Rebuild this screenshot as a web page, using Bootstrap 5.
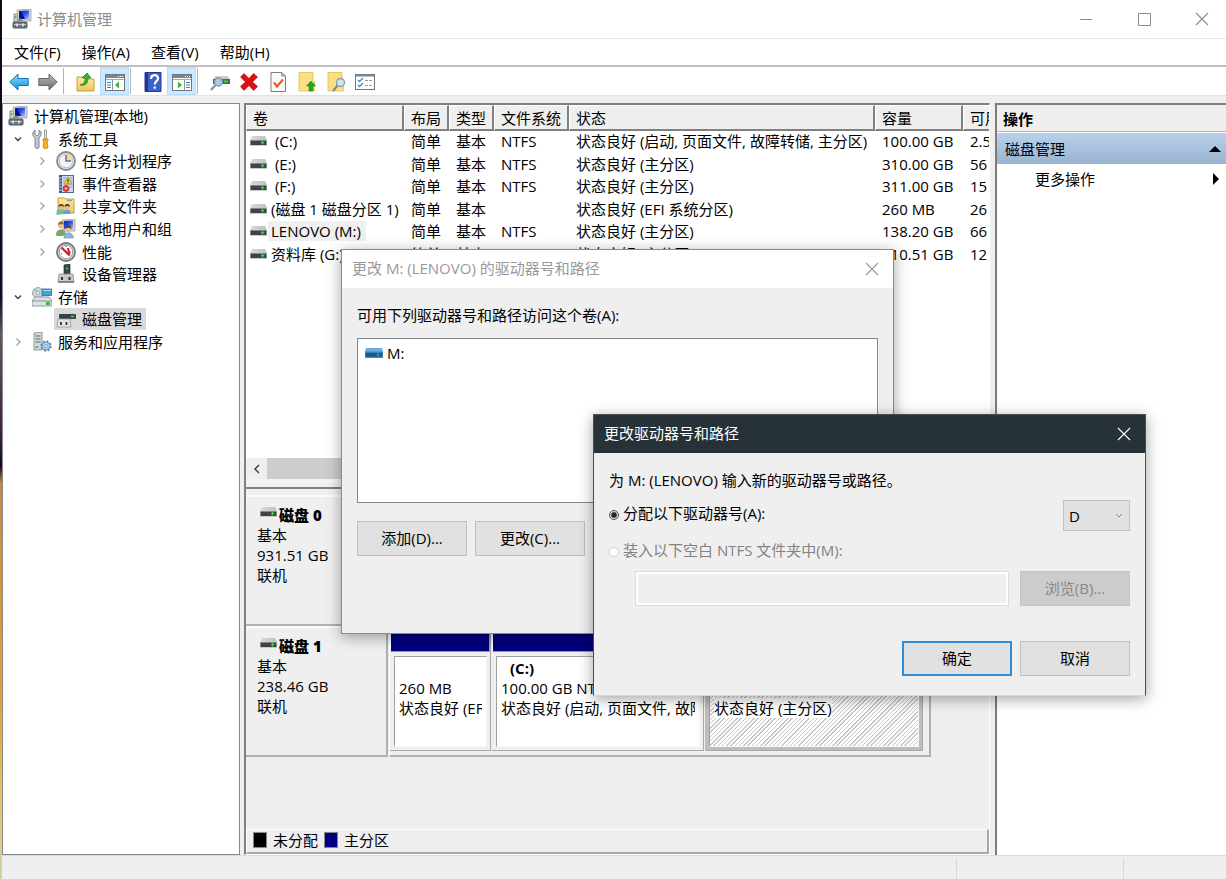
<!DOCTYPE html>
<html lang="zh-CN">
<head>
<meta charset="utf-8">
<meta name="viewport" content="width=device-width, initial-scale=1">
<title>计算机管理</title>
<link href="https://cdn.jsdelivr.net/npm/bootstrap@5.3.0/dist/css/bootstrap.min.css" rel="stylesheet">
<style>
  :root { --face: #efefef; --edge: #828790; --navy: #000080; }
  body, button, input, select { font-family: "Open Sans", "Noto Sans CJK SC", sans-serif; font-size: 15px; line-height: 20px; color: #000; }
  body { background: var(--face); overflow: hidden; }
  svg { display: block; flex: none; }
  a, a:hover { color: inherit; text-decoration: none; }
  .plain { border: 0; background: none; padding: 0; color: inherit; }
  .i20 { width: 20px; height: 20px; }
  .shell { min-width: 0; }

  .wallpaper { width: 2px; flex: none; background: linear-gradient(#120619 0%, #1a0b22 34%, #6b5560 38%, #3a1f33 50%, #120619 53%, #c98a3a 55%, #e0a23c 80%, #e6c66a 92%, #cfd2a8 100%); }
  .caption { height: 39px; background: #fff; border-bottom: 1px solid #e8e8e8; color: #8c8c8c; padding-left: 10px; gap: 5px; }
  .win-btns { margin-right: -5px; }
  .win-btns button { width: 58px; height: 38px; display: flex; align-items: center; justify-content: center; }
  .menubar { height: 28px; background: #fff; border-bottom: 2px solid #c0c0c4; padding: 0 0 1px 12px; gap: 21px; }
  .toolbar { height: 29px; background: #fff; border-bottom: 1px solid #e2e2e2; padding-left: 2px; }
  .toolbar button { width: 29px; height: 28px; padding-top: 2px; display: flex; align-items: center; justify-content: center; }
  .toolbar button.on { background: #cce8ff; border: 1px solid #b5dcfb; }
  .toolbar .rule { width: 1px; height: 26px; background: #b4b4b4; margin: 0 7px 0 1px; }

  .panes { padding-top: 7px; min-height: 0; }
  .tree { width: 238px; background: #fff; border: 1px solid var(--edge); flex: none; }
  .tree ul { display: grid; grid-auto-rows: 1fr; height: 248px; margin: 1px 0 0; padding: 0; list-style: none; }
  .tree li { display: flex; align-items: center; }
  .tree .lv0 { padding-left: 3px; }
  .tree .lv1 { padding-left: 7px; }
  .tree .lv2 { padding-left: 31px; }
  .tree .twist { width: 16px; height: 16px; margin-right: 4px; flex: none; }
  .tree a { display: flex; align-items: center; gap: 6px; padding: 0 4px 0 2px; height: 100%; }
  .tree a.picked { background: #d9d9d9; }

  .center { margin-left: 4px; min-width: 0; border: 2px solid #808080; border-right: 1px solid #fff; border-bottom: 1px solid #fff; }
  .volumes { height: 374px; background: #fff; overflow: hidden; flex: none; }
  .vol-table { table-layout: fixed; width: 817px; height: 161px; border-collapse: separate; border-spacing: 0; }
  .vol-table th { height: 26px; padding: 0 0 0 6px; font-weight: 400; background: var(--face); border: 1px solid #fff; border-right: 2px solid #808080; border-bottom: 2px solid #808080; overflow: hidden; white-space: nowrap; }
  .vol-table td { padding: 0 0 2px 7px; white-space: nowrap; line-height: 20px; overflow: hidden; }
  .vol-table td:first-child { padding-left: 4px; }
  .c-name { width: 158px; } .c-short { width: 45px; } .c-fs { width: 75px; } .c-state { width: 306px; } .c-size { width: 88px; }
  .vol-name { display: flex; align-items: center; gap: 1px; }
  .vol-name span { padding: 0 5px 0 3px; white-space: pre; }
  .vol-name .picked { background: #f0f0f0; }
  .hscroll { height: 21px; background: var(--face); }
  .hscroll button { width: 21px; height: 21px; display: flex; align-items: center; justify-content: center; }
  .hscroll .thumb { width: 420px; background: #cdcdcd; }
  .splitter { height: 10px; margin-bottom: 6px; border-top: 4px solid #f4f4f4; border-bottom: 2px solid #808080; background: var(--face); }

  .graph { background: var(--face); min-height: 0; overflow: hidden; }
  .disk { height: 131px; }
  .disk-label { width: 142px; flex: none; border: 2px solid #b0b0b0; border-left: 0; border-top: 2px solid #fcfcfc; padding: 7px 0 0 11px; }
  .disk-label .name { font-weight: 700; display: flex; margin-left: 3px; gap: 2px; height: 21px; }
  .disk-label .name svg { margin-top: 3px; }
  .disk-label .name b { padding-top: 1px; }
  .disk-parts { width: 542px; margin-left: 1px; border: 1px solid #fff; border-right: 2px solid #b0b0b0; border-bottom: 2px solid #b0b0b0; padding: 0 6px 4px 0; display: flex; gap: 1px; }
  .part { display: flex; flex-direction: column; border-right: 1px solid #a8a8a8; border-bottom: 1px solid #a8a8a8; min-width: 0; }
  .part .stripe { height: 25px; background: var(--navy); border: 1px solid #9a9a9a; border-left-color: #fff; flex: none; }
  .part .cell { flex: 1; margin: 4px 3px 3px 4px; background: #fff; border: 1px solid #a0a0a0; border-right-color: #f8f8f8; border-bottom-color: #f8f8f8; padding: 1px 4px; overflow: hidden; white-space: nowrap; }
  .part .cell b { padding-left: 9px; }
  .part .cell div { height: 20px; overflow: hidden; }
  .p-efi { flex: 0 0 101px; } .p-c { flex: 0 0 212px; } .p-m { flex: 1; }
  .part.picked { background: #bdbdbd; }
  .part.picked .cell { background: repeating-linear-gradient(135deg, #fff 0 2px, #c8c8c8 2px 3px); }
  .part.picked .cell span { background: #fff; }
  .legend { height: 25px; border: 1px solid #fff; border-right: 2px solid #a8a8a8; border-bottom: 2px solid #a8a8a8; background: var(--face); padding: 0 0 2px 6px; gap: 6px; }
  .legend i { width: 14px; height: 16px; border: 1px solid #888; }
  .sw-none { background: #000; } .sw-main { background: var(--navy); }

  .actions { width: 231px; margin-left: 5px; flex: none; background: #fff; border-left: 2px solid #7c7c7c; border-top: 2px solid #7c7c7c; }
  .actions h2 { font-size: 15px; line-height: 24px; font-weight: 700; margin: 0; padding: 2px 0 0 6px; background: var(--face); border-bottom: 1px solid #b8b8b8; }
  .actions .group { height: 31px; margin-top: 1px; padding: 0 5px 0 8px; background: linear-gradient(#b9d1ea, #99b4d1); width: 100%; }
  .actions .more { height: 30px; padding: 0 7px 0 38px; }

  .statusbar { height: 24px; border-top: 1px solid #dcdcdc; }
  .statusbar div { border-left: 1px solid #d7d7d7; margin-top: 2px; }
  .st-a { width: 167px; } .st-b { width: 103px; }

  .dlg { position: absolute; width: 553px; background: var(--face); border: 1px solid #8a8a8a; box-shadow: 0 3px 14px rgba(0,0,0,.36); }
  .dlg header { height: 38px; padding-left: 10px; }
  .dlg header span { padding-bottom: 2px; }
  .dlg header button { width: 42px; height: 38px; display: flex; align-items: center; justify-content: center; }
  .dlg .push { width: 110px; height: 35px; background: #e1e1e1; border: 1px solid #c0c0c0; border-radius: 0; padding: 0 0 2px; }
  .dlg .push.main { border: 2px solid #2f8bd8; }
  .dlg .push:disabled { background: #cccccc; border-color: #c4c4c4; color: #888; }
  .dlg .pair { gap: 8px; }
  .dlg-paths { left: 341px; top: 249px; height: 385px; }
  .dlg-paths header { background: #fff; color: #999; }
  .dlg-paths .body { padding: 17px 15px; }
  .dlg-paths .paths { height: 165px; margin: 13px 0 18px; background: #fff; border: 1px solid var(--edge); padding: 4px 7px; list-style: none; }
  .dlg-letter { left: 593px; top: 414px; height: 282px; border-color: #4a4f52; border-bottom-color: #d8d8d8; }
  .dlg-letter header { background: #273238; color: #fff; }
  .dlg-letter .body { padding: 17px 15px 20px; }
  .dlg-letter .assign { margin-top: 10px; }
  .dlg-letter .assign div { padding-bottom: 6px; }
  .dlg-letter .mount { margin-top: 9px; color: #838383; }
  .dlg-letter .target { margin-top: 11px; padding-left: 26px; gap: 11px; }
  .dlg-letter .answer { margin-top: 35px; }
  .dlg-letter input[type=radio] { appearance: none; width: 10px; height: 10px; margin: 4px 4px 0 0; border: 1px solid #555; border-radius: 50%; background: #fff; }
  .dlg-letter input[type=radio]:checked { background: radial-gradient(circle, #222 0 2px, #fff 4px); }
  .dlg-letter input[type=radio]:disabled { border-color: #d2d2d2; }
  .dlg-letter select { width: 67px; height: 31px; border: 1px solid #c2c2c2; border-radius: 0; background: #e1e1e1 url("data:image/svg+xml,%3Csvg xmlns='http://www.w3.org/2000/svg' width='8' height='6'%3E%3Cpath d='M1 1l3 3 3-3' fill='none' stroke='%23888'/%3E%3C/svg%3E") no-repeat right 6px center; padding: 0 0 0 5px; appearance: none; }
  .dlg-letter .folder { height: 35px; border: 1px solid #dcdcdc; border-radius: 0; background: var(--face); box-shadow: inset 0 0 0 2px #fff; }
</style>
</head>
<body class="vh-100 d-flex">

<svg width="0" height="0" class="position-absolute" aria-hidden="true">
  <defs>
    <linearGradient id="gScreen" x1="0" y1="0" x2="1" y2="1"><stop offset="0" stop-color="#0a1fae"/><stop offset=".5" stop-color="#2c50e8"/><stop offset="1" stop-color="#a9c6ff"/></linearGradient>
    <linearGradient id="gBlue" x1="0" y1="0" x2="0" y2="1"><stop offset="0" stop-color="#8adcff"/><stop offset="1" stop-color="#1590dd"/></linearGradient>
    <linearGradient id="gGrey" x1="0" y1="0" x2="0" y2="1"><stop offset="0" stop-color="#b8b8b8"/><stop offset="1" stop-color="#707070"/></linearGradient>
    <linearGradient id="gFold" x1="0" y1="0" x2="0" y2="1"><stop offset="0" stop-color="#ffe9a0"/><stop offset="1" stop-color="#eec563"/></linearGradient>
    <linearGradient id="gTop" x1="0" y1="0" x2="1" y2="0"><stop offset="0" stop-color="#d9dbdd"/><stop offset="1" stop-color="#bcc0c4"/></linearGradient>
  </defs>
  <symbol id="computer" viewBox="0 0 20 20">
    <path d="M2 5h4v9H2z" fill="#c8ccd0" stroke="#8a9096"/><path d="M2.500 8h2" stroke="#30c030" stroke-width="1.500"/>
    <path d="M5 1l14-1v12l-13 0z" fill="#d7d4c6" stroke="#a5a294" stroke-width=".8"/><path d="M7 2l10-.6v9L7 10z" fill="url(#gScreen)"/>
    <path d="M9 2l4 8H7V4z" fill="#06128e"/><path d="M5 12l3-3 3 3z" fill="#7d858c"/>
    <rect x="1" y="13" width="14" height="6" rx="1" fill="#6a777f" stroke="#4c575e"/><path d="M2 15.500h12" stroke="#b9c3c9"/><path d="M5 14.500v3M11 14.500v3" stroke="#e8eef0" stroke-width="1.500"/>
  </symbol>
  <symbol id="tools" viewBox="0 0 20 20">
    <path d="M3 1v4l2 2 2-2V1c2 1 3 3 2 5L7 9v9c0 2-4 2-4 0V9C0 7 0 3 3 1z" fill="#c4c8cb" stroke="#777d82" stroke-width=".9"/>
    <path d="M12.500 1h2v9h-2z" fill="#e8eaec" stroke="#888" stroke-width=".8"/><path d="M11 10h5v2l-1 1 1 5c0 2-5 2-5 0l1-5-1-1z" fill="#f7b51c" stroke="#bb7a07" stroke-width=".8"/>
  </symbol>
  <symbol id="clock" viewBox="0 0 20 20"><circle cx="10" cy="10" r="9" fill="#e9ebec" stroke="#85898d" stroke-width="1.800"/><circle cx="10" cy="10" r="6.800" fill="#eef4f9" stroke="#b5b9bd"/><path d="M10 10V3.200A6.800 6.800 0 0 1 16.800 10z" fill="#f8dc9b"/><path d="M10 4v6h5" fill="none" stroke="#4d7295" stroke-width="1.500"/></symbol>
  <symbol id="event" viewBox="0 0 20 20"><rect x="3.500" y="1.500" width="14" height="17" fill="#c9daf0" stroke="#4a6b9d"/><path d="M3 1h3v18H3z" fill="#3c5c92"/><path d="M1.500 4h4M1.500 7h4M1.500 10h4M1.500 13h4M1.500 16h4" stroke="#d5dce6"/><path d="M7 4h10M7 7h10M7 10h10M7 13h10" stroke="#8da9d0"/><path d="M12 3l4 7H8z" fill="#ffd52e" stroke="#b79000" stroke-width=".7"/><path d="M12 5v3M12 8.500v1" stroke="#222" stroke-width="1"/><circle cx="10" cy="14.500" r="3" fill="#e43a3a" stroke="#a11818" stroke-width=".6"/><path d="M9 13.500l2 2m0-2l-2 2" stroke="#fff"/></symbol>
  <symbol id="share" viewBox="0 0 20 20"><path d="M2 4V2h6l2 1h8v14H2z" fill="url(#gFold)" stroke="#c69c3c"/><path d="M11 4.500h5" stroke="#69a3d8" stroke-width="1.300"/><path d="M.5 19v-3c0-4 7-4 8-1v3z" fill="#6fbf9a"/><path d="M7.500 18v-2c0-3.500 7-3.500 7 0v2z" fill="#6aa0d8"/><circle cx="5" cy="11.500" r="2.400" fill="#e7bb8e"/><path d="M2.500 11c0-4 5.500-4 5.500 0L5.500 9.500z" fill="#4a301b"/><circle cx="11" cy="11.500" r="2.400" fill="#e7bb8e"/><path d="M8.500 11c0-4 5.500-4 5.500 0l-2.500-1.500z" fill="#3a2516"/></symbol>
  <symbol id="users" viewBox="0 0 20 20"><path d="M6 1l13-1v12H7z" fill="#d7d4c6" stroke="#a5a294" stroke-width=".8"/><path d="M8 2l9-.5V10H8z" fill="url(#gScreen)"/><circle cx="5" cy="6.500" r="3" fill="#e7bb8e"/><path d="M2 6c0-5 6-5 6-.5L5 5z" fill="#9c6a25"/><path d="M0 16c0-7 9-7 10-1l-3 2H1z" fill="#7aa763"/><circle cx="12.500" cy="10" r="3" fill="#e7bb8e"/><path d="M9.500 9.500c0-5 6.500-4 6 .5L13 8.500z" fill="#5b3d22"/><path d="M8 19c0-7 9-7 9.500 0z" fill="#8fb6de" stroke="#5f8ab5" stroke-width=".6"/></symbol>
  <symbol id="perf" viewBox="0 0 20 20"><circle cx="10" cy="10" r="9" fill="#d9dbdc" stroke="#77797c" stroke-width="1.800"/><circle cx="10" cy="10" r="6.800" fill="#fff" stroke="#999"/><path d="M5.500 5.500l8 8M12 6l1.500 7.500" stroke="#e02020" stroke-width="2.200" fill="none"/><path d="M5 12l1-.5M10 5V4M15 10h-1" stroke="#2a7a3a"/></symbol>
  <symbol id="device" viewBox="0 0 20 20"><path d="M8 1l6-1v10H8z" fill="#3f4448" stroke="#24282b" stroke-width=".7"/><path d="M10 4.500h2" stroke="#46d846" stroke-width="1.300"/><path d="M3 10h14l1 8H2z" fill="#c7cacc" stroke="#8a8e91" stroke-width=".8"/><path d="M2 18h16" stroke="#6c7073" stroke-width="1.400"/><path d="M6 13v3M13.500 13v3" stroke="#303438" stroke-width="2"/></symbol>
  <symbol id="storage" viewBox="0 0 20 20"><circle cx="6" cy="6" r="5.500" fill="#cfd6da" stroke="#8c959a" stroke-width=".8"/><path d="M6 6L1 3a6 6 0 0 1 3-2z" fill="#8ed0a0"/><circle cx="6" cy="6" r="1.700" fill="#fff" stroke="#8a8a8a" stroke-width=".7"/><rect x="10" y="2" width="9.500" height="6.500" fill="#3ea4dd" stroke="#266f9c" stroke-width=".8"/><path d="M11 3.500h8" stroke="#a8def8"/><path d="M3 10h14l3 4v5H0v-5z" fill="#dfe2e4" stroke="#8b9094" stroke-width=".9"/><path d="M0 14h20" stroke="#8b9094"/><rect x="14" y="15" width="4" height="3" fill="#3dbb35"/></symbol>
  <symbol id="diskmgmt" viewBox="0 0 20 20"><path d="M6 3h11l2 2H4z" fill="#d4d7da"/><rect x="3" y="5" width="17" height="5" rx="1" fill="#3b4044"/><path d="M15 7.500h3" stroke="#42e042" stroke-width="1.600"/><path d="M2 10h12l1 8H1z" fill="#e3e4e5" stroke="#989b9e" stroke-width=".8"/><path d="M5 13v3M10.500 13v3" stroke="#303438" stroke-width="1.800"/></symbol>
  <symbol id="service" viewBox="0 0 20 20"><path d="M2 1l8-1v18H2z" fill="#d4dadd" stroke="#7f898e" stroke-width=".8"/><path d="M3.500 4h5M3.500 7h5M3.500 10h5" stroke="#54646d"/><path d="M3.500 15h3" stroke="#39b339" stroke-width="1.500"/><circle cx="14" cy="14" r="4" fill="#bcd5ea" stroke="#5c8db5" stroke-width="1"/><circle cx="14" cy="14" r="5" fill="none" stroke="#5c8db5" stroke-width="1.500" stroke-dasharray="2 1.900"/><circle cx="14" cy="14" r="1.500" fill="#fff" stroke="#5c8db5" stroke-width=".8"/></symbol>
  <symbol id="drive" viewBox="0 0 17 10"><path d="M2 0h13l2 4H0z" fill="url(#gTop)"/><rect y="4" width="17" height="6" fill="#c9ccce"/><rect x=".5" y="4.500" width="16" height="4.500" fill="#3d4347"/><path d="M12.500 5v3.500M11 6.700h3.200" stroke="#2fe02f" stroke-width="1.200"/></symbol>
  <symbol id="driveblue" viewBox="0 0 18 10"><path d="M1 0h16l1 4H0z" fill="#6cabdc"/><rect y="3.500" width="18" height="6.500" fill="#3f8cc8"/><rect x=".8" y="4.800" width="16.400" height="4" fill="#1a5688"/><path d="M13 5v3.500M11.800 6.800h3" stroke="#20a878" stroke-width="1.200"/></symbol>
  <symbol id="open" viewBox="0 0 16 16"><path d="M5 6.500l3 3 3-3" fill="none" stroke="#404040" stroke-width="1.400"/></symbol>
  <symbol id="closed" viewBox="0 0 16 16"><path d="M6.500 4.500L10 8l-3.500 3.500" fill="none" stroke="#a0a0a0" stroke-width="1.300"/></symbol>
  <symbol id="cross" viewBox="0 0 14 14"><path d="M1 1l12 12M13 1L1 13" fill="none" stroke="currentColor" stroke-width="1.100"/></symbol>
</svg>

<div class="wallpaper"></div>
<div class="shell d-flex flex-column flex-grow-1">
  <header class="caption d-flex align-items-center">
    <svg class="i20"><use href="#computer"/></svg>
    <span class="flex-grow-1">计算机管理</span>
    <div class="win-btns d-flex">
      <button class="plain" aria-label="最小化"><svg width="13" height="13"><path d="M0 6.500h12" stroke="#8c8c8c"/></svg></button>
      <button class="plain" aria-label="最大化"><svg width="13" height="13"><path d="M.5.5h12v12H.5z" fill="none" stroke="#8c8c8c"/></svg></button>
      <button class="plain" aria-label="关闭"><svg width="14" height="14"><use href="#cross"/></svg></button>
    </div>
  </header>
  <nav class="menubar d-flex align-items-center">
    <button class="plain">文件(F)</button><button class="plain">操作(A)</button><button class="plain">查看(V)</button><button class="plain">帮助(H)</button>
  </nav>
  <div class="toolbar d-flex align-items-center">
    <button class="plain" aria-label="后退"><svg class="i20" viewBox="0 0 20 20"><path d="M.8 10L9 2v4.500h10.200v7H9V18z" fill="url(#gBlue)" stroke="#1670b0"/></svg></button>
    <button class="plain" aria-label="前进"><svg class="i20" viewBox="0 0 20 20"><path d="M19.200 10L11 2v4.500H.8v7H11V18z" fill="url(#gGrey)" stroke="#666"/></svg></button>
    <span class="rule"></span>
    <button class="plain" aria-label="上移"><svg class="i20" viewBox="0 0 20 20"><path d="M1 5h7l2 2h8v12H1z" fill="url(#gFold)" stroke="#c69c3c"/><path d="M4 13c4-1 5-3 5-7H6l5-5 4 5h-3c0 6-3 8-8 7z" fill="#35b52e" stroke="#1f7a1c" stroke-width=".7"/></svg></button>
    <button class="plain on" aria-label="显示/隐藏控制台树"><svg class="i20" viewBox="0 0 20 20"><rect x=".5" y="2.500" width="19" height="16" fill="#fff" stroke="#6f7880"/><path d="M1 3h18v3H1z" fill="#7c868e"/><path d="M1 7.500h18" stroke="#a3abb2"/><path d="M13 4.500h1m1 0h1m1 0h1" stroke="#fff"/><path d="M7.500 8v10" stroke="#8a949c"/><path d="M2 10.500h4M2 13h4M2 15.500h4" stroke="#3c84bf"/><path d="M14 9.500v7L10 13z" fill="#3fb528"/></svg></button>
    <span class="rule"></span>
    <button class="plain" aria-label="帮助"><svg class="i20" viewBox="0 0 20 20"><path d="M2 .5h16v19H2z" fill="#3a62cf" stroke="#24388b"/><path d="M2 0h3v20H2z" fill="#1e3694"/><path d="M8 7c0-5 7-5 7-.8 0 3-3.300 2.800-3.300 6.300M11.700 14.500v2.300" fill="none" stroke="#fff" stroke-width="2.200"/></svg></button>
    <button class="plain on" aria-label="显示/隐藏操作窗格"><svg class="i20" viewBox="0 0 20 20"><rect x=".5" y="2.500" width="19" height="16" fill="#fff" stroke="#6f7880"/><path d="M1 3h18v3H1z" fill="#7c868e"/><path d="M1 7.500h18" stroke="#a3abb2"/><path d="M13 4.500h1m1 0h1m1 0h1" stroke="#fff"/><path d="M12.500 8v10" stroke="#8a949c"/><path d="M14 10.500h4M14 13h4M14 15.500h4" stroke="#3c84bf"/><path d="M6 9.500v7l4-3.500z" fill="#3fb528"/></svg></button>
    <span class="rule"></span>
    <button class="plain" aria-label="重新扫描"><svg class="i20" viewBox="0 0 20 20"><path d="M5 4h13l2 4H3z" fill="#c9cccf"/><rect x="3" y="7" width="17" height="5" fill="#555b60"/><path d="M14 9.500h4" stroke="#2fd52f" stroke-width="2.200"/><circle cx="8.500" cy="10" r="4" fill="#a8cbe6" stroke="#8797a4" stroke-width="1.300"/><path d="M5.500 13L1 18" stroke="#8b949c" stroke-width="2.200"/></svg></button>
    <button class="plain" aria-label="删除"><svg class="i20" viewBox="0 0 20 20"><path d="M5 1.500l5 5 4.500-5L18.500 5l-5 5 5 4.500-4 4-4.500-5-5 5-3.500-4 5-4.500-5-5z" fill="#e00d0d" stroke="#a80000" stroke-width=".6"/></svg></button>
    <button class="plain" aria-label="属性"><svg class="i20" viewBox="0 0 20 20"><path d="M3 .5h10.500L17.500 4v15.500H3z" fill="#fafafa" stroke="#7c7c7c"/><path d="M13.500.5V4h4z" fill="#ccc" stroke="#7c7c7c" stroke-width=".7"/><path d="M6 10.500l3 4 6-7" fill="none" stroke="#ef5a24" stroke-width="2.200"/></svg></button>
    <button class="plain" aria-label="打开"><svg class="i20" viewBox="0 0 20 20"><path d="M2 .5h14v9h1.500V19H2z" fill="#fbdf83" stroke="#e3bd54" stroke-width=".8"/><path d="M14 9l4.500 5H16v5h-4v-5H9.500z" fill="#25a51f" stroke="#167a12" stroke-width=".5"/></svg></button>
    <button class="plain" aria-label="浏览"><svg class="i20" viewBox="0 0 20 20"><path d="M2 .5h14v9h1.500V19H2z" fill="#fbdf83" stroke="#e3bd54" stroke-width=".8"/><circle cx="14.500" cy="10.500" r="4" fill="#cfe5f5" stroke="#8a9baa" stroke-width="1.300"/><path d="M11.500 13.500L7 19" stroke="#7b8791" stroke-width="2"/></svg></button>
    <button class="plain" aria-label="选项"><svg class="i20" viewBox="0 0 20 20"><rect x=".5" y="2.500" width="19" height="15" fill="#fff" stroke="#6f7880"/><path d="M1 3.500h18" stroke="#7c868e" stroke-width="2"/><path d="M3 8l1.500 1.500L8 6M3 13l1.500 1.500L8 11" fill="none" stroke="#3a8ed6" stroke-width="1.400"/><path d="M10 8.500h7M10 13.500h7" stroke="#9a9a9a" stroke-dasharray="3 1"/></svg></button>
  </div>

  <main class="panes d-flex flex-grow-1">
    <nav class="tree">
      <ul>
        <li class="lv0"><a href="#"><svg class="i20"><use href="#computer"/></svg>计算机管理(本地)</a></li>
        <li class="lv1"><svg class="twist"><use href="#open"/></svg><a href="#"><svg class="i20"><use href="#tools"/></svg>系统工具</a></li>
        <li class="lv2"><svg class="twist"><use href="#closed"/></svg><a href="#"><svg class="i20"><use href="#clock"/></svg>任务计划程序</a></li>
        <li class="lv2"><svg class="twist"><use href="#closed"/></svg><a href="#"><svg class="i20"><use href="#event"/></svg>事件查看器</a></li>
        <li class="lv2"><svg class="twist"><use href="#closed"/></svg><a href="#"><svg class="i20"><use href="#share"/></svg>共享文件夹</a></li>
        <li class="lv2"><svg class="twist"><use href="#closed"/></svg><a href="#"><svg class="i20"><use href="#users"/></svg>本地用户和组</a></li>
        <li class="lv2"><svg class="twist"><use href="#closed"/></svg><a href="#"><svg class="i20"><use href="#perf"/></svg>性能</a></li>
        <li class="lv2"><span class="twist"></span><a href="#"><svg class="i20"><use href="#device"/></svg>设备管理器</a></li>
        <li class="lv1"><svg class="twist"><use href="#open"/></svg><a href="#"><svg class="i20"><use href="#storage"/></svg>存储</a></li>
        <li class="lv2"><span class="twist"></span><a href="#" class="picked"><svg class="i20"><use href="#diskmgmt"/></svg>磁盘管理</a></li>
        <li class="lv1"><svg class="twist"><use href="#closed"/></svg><a href="#"><svg class="i20"><use href="#service"/></svg>服务和应用程序</a></li>
      </ul>
    </nav>

    <section class="center flex-grow-1 d-flex flex-column">
      <div class="volumes d-flex flex-column">
        <div class="flex-grow-1 overflow-hidden">
          <table class="vol-table">
            <colgroup><col class="c-name"><col class="c-short"><col class="c-short"><col class="c-fs"><col class="c-state"><col class="c-size"><col></colgroup>
            <thead><tr><th>卷</th><th>布局</th><th>类型</th><th>文件系统</th><th>状态</th><th>容量</th><th>可用空间</th></tr></thead>
            <tbody>
              <tr><td><div class="vol-name"><svg width="17" height="10"><use href="#drive"/></svg><span> (C:)</span></div></td><td>简单</td><td>基本</td><td>NTFS</td><td>状态良好 (启动, 页面文件, 故障转储, 主分区)</td><td>100.00 GB</td><td>2.5</td></tr>
              <tr><td><div class="vol-name"><svg width="17" height="10"><use href="#drive"/></svg><span> (E:)</span></div></td><td>简单</td><td>基本</td><td>NTFS</td><td>状态良好 (主分区)</td><td>310.00 GB</td><td>56</td></tr>
              <tr><td><div class="vol-name"><svg width="17" height="10"><use href="#drive"/></svg><span> (F:)</span></div></td><td>简单</td><td>基本</td><td>NTFS</td><td>状态良好 (主分区)</td><td>311.00 GB</td><td>15</td></tr>
              <tr><td><div class="vol-name"><svg width="17" height="10"><use href="#drive"/></svg><span>(磁盘 1 磁盘分区 1)</span></div></td><td>简单</td><td>基本</td><td></td><td>状态良好 (EFI 系统分区)</td><td>260 MB</td><td>26</td></tr>
              <tr><td><div class="vol-name"><svg width="17" height="10"><use href="#drive"/></svg><span class="picked">LENOVO (M:)</span></div></td><td>简单</td><td>基本</td><td>NTFS</td><td>状态良好 (主分区)</td><td>138.20 GB</td><td>66</td></tr>
              <tr><td><div class="vol-name"><svg width="17" height="10"><use href="#drive"/></svg><span>资料库 (G:)</span></div></td><td>简单</td><td>基本</td><td>NTFS</td><td>状态良好 (主分区)</td><td>310.51 GB</td><td>12</td></tr>
            </tbody>
          </table>
        </div>
        <div class="hscroll d-flex"><button class="plain" aria-label="向左滚动"><svg width="8" height="10"><path d="M6 1L2 5l4 4" fill="none" stroke="#404040" stroke-width="1.500"/></svg></button><div class="thumb"></div></div>
      </div>
      <div class="splitter"></div>
      <div class="graph flex-grow-1">
        <div class="disk d-flex">
          <div class="disk-label"><div class="name"><svg width="17" height="10"><use href="#drive"/></svg><b>磁盘 0</b></div>基本<br>931.51 GB<br>联机</div>
          <div class="disk-parts"></div>
        </div>
        <div class="disk d-flex">
          <div class="disk-label"><div class="name"><svg width="17" height="10"><use href="#drive"/></svg><b>磁盘 1</b></div>基本<br>238.46 GB<br>联机</div>
          <div class="disk-parts">
            <div class="part p-efi"><div class="stripe"></div><div class="cell"><div></div><div>260 MB</div><div>状态良好 (EFI 系统分区)</div></div></div>
            <div class="part p-c"><div class="stripe"></div><div class="cell"><div><b>(C:)</b></div><div>100.00 GB NTFS</div><div>状态良好 (启动, 页面文件, 故障转储, 主分区)</div></div></div>
            <div class="part p-m picked"><div class="stripe"></div><div class="cell"><div></div><div></div><div><span>状态良好 (主分区)</span></div></div></div>
          </div>
        </div>
      </div>
      <div class="legend d-flex align-items-center"><i class="sw-none"></i>未分配<i class="sw-main"></i>主分区</div>
    </section>

    <aside class="actions">
      <h2>操作</h2>
      <button class="plain group d-flex align-items-center justify-content-between">磁盘管理<svg width="12" height="6"><path d="M0 6l6-6 6 6z"/></svg></button>
      <a href="#" class="more d-flex align-items-center justify-content-between">更多操作<svg width="6" height="12"><path d="M0 0l6 6-6 6z"/></svg></a>
    </aside>
  </main>

  <footer class="statusbar d-flex justify-content-end"><div class="st-a"></div><div class="st-b"></div></footer>
</div>

<section class="dlg dlg-paths" role="dialog" aria-labelledby="t1">
  <header class="d-flex align-items-center"><span id="t1" class="flex-grow-1">更改 M: (LENOVO) 的驱动器号和路径</span><button class="plain" aria-label="关闭"><svg width="14" height="14"><use href="#cross"/></svg></button></header>
  <div class="body">
    <div>可用下列驱动器号和路径访问这个卷(A):</div>
    <ul class="paths"><li class="d-flex align-items-center"><svg width="18" height="10" class="me-1"><use href="#driveblue"/></svg>M:</li></ul>
    <div class="pair d-flex"><button class="push">添加(D)...</button><button class="push">更改(C)...</button></div>
  </div>
</section>

<section class="dlg dlg-letter" role="dialog" aria-labelledby="t2">
  <header class="d-flex align-items-center"><span id="t2" class="flex-grow-1">更改驱动器号和路径</span><button class="plain" aria-label="关闭"><svg width="14" height="14"><use href="#cross"/></svg></button></header>
  <form class="body">
    <div>为 M: (LENOVO) 输入新的驱动器号或路径。</div>
    <div class="assign d-flex justify-content-between">
      <div class="d-flex align-items-center"><input type="radio" name="mode" id="r1" checked><label for="r1">分配以下驱动器号(A):</label></div>
      <select aria-label="驱动器号"><option>D</option></select>
    </div>
    <div class="mount d-flex align-items-center"><input type="radio" name="mode" id="r2" disabled><label for="r2">装入以下空白 NTFS 文件夹中(M):</label></div>
    <div class="target d-flex"><input type="text" class="folder flex-grow-1" aria-label="文件夹" disabled><button type="button" class="push" disabled>浏览(B)...</button></div>
    <div class="answer pair d-flex justify-content-end"><button type="button" class="push main">确定</button><button type="button" class="push">取消</button></div>
  </form>
</section>
<script src="https://cdn.jsdelivr.net/npm/bootstrap@5.3.0/dist/js/bootstrap.bundle.min.js"></script>
</body>
</html>
